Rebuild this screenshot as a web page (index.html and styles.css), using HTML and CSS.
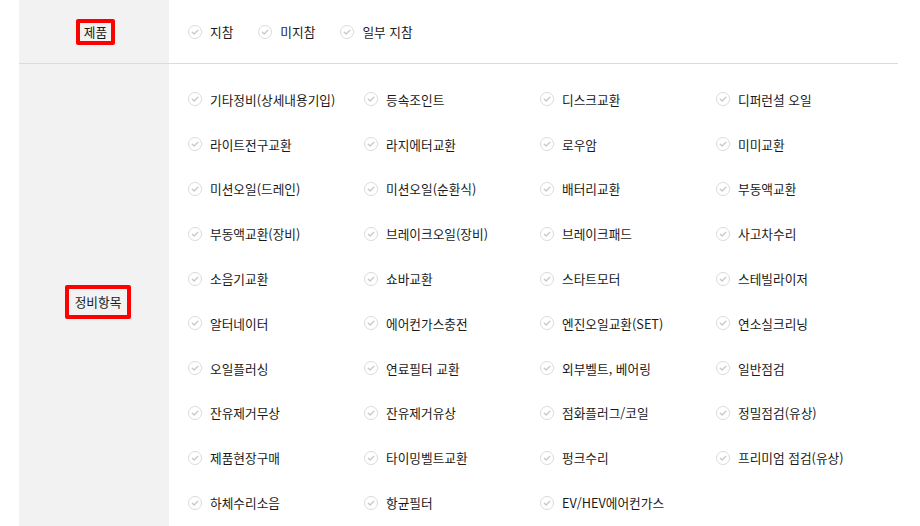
FILE: index.html
```html
<!DOCTYPE html>
<html lang="ko">
<head>
    <meta charset="UTF-8">
    <meta name="viewport" content="width=device-width, initial-scale=1.0">
    <title>정비 검색 필터</title>
    <link rel="stylesheet" href="styles.css">
</head>
<body>
    <div class="filter-table">
        <div class="filter-row first">
            <div class="filter-head"><span class="mark small">제품</span></div>
            <div class="filter-body inline">
                <label class="chk"><svg class="ico" viewBox="0 0 14 14"><circle cx="7" cy="7" r="6.5"/><path d="M4.3 7.2 L6.2 9 L9.8 5.3"/></svg>지참</label>
                <label class="chk"><svg class="ico" viewBox="0 0 14 14"><circle cx="7" cy="7" r="6.5"/><path d="M4.3 7.2 L6.2 9 L9.8 5.3"/></svg>미지참</label>
                <label class="chk"><svg class="ico" viewBox="0 0 14 14"><circle cx="7" cy="7" r="6.5"/><path d="M4.3 7.2 L6.2 9 L9.8 5.3"/></svg>일부 지참</label>
            </div>
        </div>
        <div class="filter-row">
            <div class="filter-head"><span class="mark big">정비항목</span></div>
            <div class="filter-body grid" id="items"></div>
        </div>
    </div>

    <script>
        // 정비항목 목록
        var items = [
            "기타정비(상세내용기입)", "등속조인트", "디스크교환", "디퍼런셜 오일",
            "라이트전구교환", "라지에터교환", "로우암", "미미교환",
            "미션오일(드레인)", "미션오일(순환식)", "배터리교환", "부동액교환",
            "부동액교환(장비)", "브레이크오일(장비)", "브레이크패드", "사고차수리",
            "소음기교환", "쇼바교환", "스타트모터", "스테빌라이저",
            "알터네이터", "에어컨가스충전", "엔진오일교환(SET)", "연소실크리닝",
            "오일플러싱", "연료필터 교환", "외부벨트, 베어링", "일반점검",
            "잔유제거무상", "잔유제거유상", "점화플러그/코일", "정밀점검(유상)",
            "제품현장구매", "타이밍벨트교환", "펑크수리", "프리미엄 점검(유상)",
            "하체수리소음", "항균필터", "EV/HEV에어컨가스"
        ];
        var icon = '<svg class="ico" viewBox="0 0 14 14"><circle cx="7" cy="7" r="6.5"/><path d="M4.3 7.2 L6.2 9 L9.8 5.3"/></svg>';
        var html = "";
        for (var i = 0; i < items.length; i++) {
            html += '<label class="chk">' + icon + items[i] + '</label>';
        }
        document.getElementById("items").innerHTML = html;
    </script>
</body>
</html>
```

FILE: styles.css
```css
/* 검색 필터 */
body {
    margin: 0;
    padding: 0;
    background-color: #fff;
    font-family: "Noto Sans CJK KR", "Noto Sans", sans-serif;
    font-size: 12.7px;
    color: #1a1a1a;
}

.filter-table {
    margin-left: 19px;
    width: 879px;
}

.filter-row {
    display: flex;
}

.filter-row.first {
    height: 63px;
    border-bottom: 1px solid #dcdcdc;
}

.filter-head {
    width: 150px;
    flex-shrink: 0;
    background-color: #f2f2f2;
    display: flex;
    align-items: center;
    justify-content: center;
}

.filter-body {
    flex: 1;
    padding-left: 19px;
}

.filter-body.inline {
    display: flex;
    align-items: center;
    gap: 25px;
}

.filter-body.grid {
    display: grid;
    grid-template-columns: repeat(4, 176px);
    grid-auto-rows: 44.8px;
    padding-top: 13px;
    padding-bottom: 15px;
}

.mark {
    border: 4px solid #f00;
    border-radius: 2px;
    line-height: 18px;
}

.mark.small {
    padding: 0 4px;
    margin-left: 3px;
}

.mark.big {
    padding: 4px 6px;
    margin-left: 8px;
}

.chk {
    display: flex;
    align-items: center;
    gap: 8px;
    cursor: pointer;
}

.ico {
    width: 14px;
    height: 14px;
    flex-shrink: 0;
}

.ico circle {
    fill: #fff;
    stroke: #dadada;
    stroke-width: 1;
}

.ico path {
    fill: none;
    stroke: #c8c8c8;
    stroke-width: 1.3;
    stroke-linecap: round;
    stroke-linejoin: round;
}
```
